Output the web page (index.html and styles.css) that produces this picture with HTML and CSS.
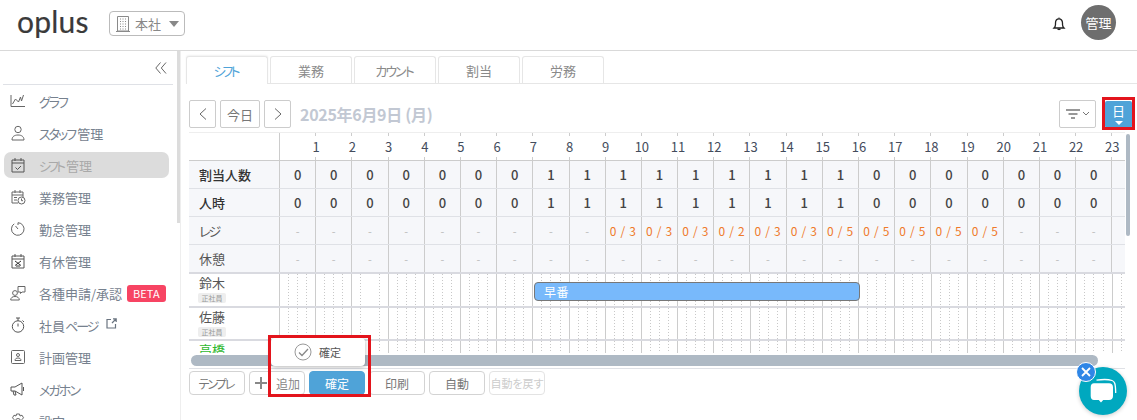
FILE: index.html
```html
<!DOCTYPE html>
<html lang="ja">
<head>
<meta charset="utf-8">
<title>oplus</title>
<link rel="stylesheet" href="styles.css">
</head>
<body>
<header class="topbar">
  <div class="logo">oplus</div>
  <div class="store">
    <svg class="store-icon" viewBox="0 0 14 16" width="14" height="16"><path d="M1.500.5h11v14.500h-11zM0 15.500h14M4 3h1M6.500 3h1M9 3h1M4 5.500h1M6.500 5.500h1M9 5.500h1M4 8h1M6.500 8h1M9 8h1M4 10.500h1M6.500 10.500h1M9 10.500h1M4 13h1M6.500 13h1M9 13h1" fill="none" stroke="#8a8a8a"/></svg>
    <span class="store-name">本社</span>
    <span class="caret"></span>
  </div>
  <div class="top-right">
    <svg viewBox="0 0 14 14" width="14" height="14"><path d="M2 11h10c-1-1-1.500-2-1.500-3.500V6C10.500 3.500 9 1.800 7 1.800S3.500 3.500 3.500 6v1.500C3.500 9 3 10 2 11z" fill="none" stroke="#222" stroke-width="1.300"/><path d="M5.500 12.300h3" stroke="#222" stroke-width="1.500"/><path d="M7 .5v1.200" stroke="#222"/></svg>
    <div class="avatar">管理</div>
  </div>
</header>
<div class="shell">
  <nav class="sidebar">
    <div class="collapse">
      <svg viewBox="0 0 12 12" width="12" height="12"><path d="M5.500 .5 .8 6l4.700 5.500M11 .5 6.300 6l4.700 5.500" fill="none" stroke="#666"/></svg>
    </div>
    <div class="nav-item">
      <svg class="nav-icon" viewBox="0 0 16 16"><path d="M1 2v11.500h14M2.500 11l3-5 3 3 2-5 1 4 2-6" fill="none" stroke="#666"/></svg>
      <span class="kana">グラフ</span>
    </div>
    <div class="nav-item">
      <svg class="nav-icon" viewBox="0 0 16 16"><circle cx="8" cy="4.500" r="3.200" fill="none" stroke="#666"/><path d="M2 15c0-3.500 2.500-5 6-5s6 1.500 6 5z" fill="none" stroke="#666"/></svg>
      <span><span class="kana">スタッフ</span>管理</span>
    </div>
    <div class="nav-item active">
      <svg class="nav-icon" viewBox="0 0 16 16"><path d="M2 3h12v12H2zM2 6h12M5 1v3M11 1v3M5.500 10.500l2 2 3.500-3.500" fill="none" stroke="#555"/></svg>
      <span><span class="kana tight">シフト</span>管理</span>
    </div>
    <div class="nav-item">
      <svg class="nav-icon" viewBox="0 0 16 16"><path d="M8 14H2V3h11v5M2 6h11M5 1v3M10 1v3M4 8.500h3M4 11h3" fill="none" stroke="#666"/><circle cx="11.500" cy="11.500" r="3.500" fill="#fff" stroke="#666"/><path d="M11.500 9.500v2.200h1.500" fill="none" stroke="#666"/></svg>
      <span>業務管理</span>
    </div>
    <div class="nav-item">
      <svg class="nav-icon" viewBox="0 0 16 16"><path d="M4.200 2.800A6.300 6.300 0 1 0 8 1.700V4M8 8 5.500 5" fill="none" stroke="#666"/></svg>
      <span>勤怠管理</span>
    </div>
    <div class="nav-item">
      <svg class="nav-icon" viewBox="0 0 16 16"><path d="M2 3h12v12H2zM2 6h12M5 1v3M11 1v3" fill="none" stroke="#555"/><path d="M5 8l6 4.500M11 8l-6 4.500M6 13h4" fill="none" stroke="#333"/></svg>
      <span>有休管理</span>
    </div>
    <div class="nav-item">
      <svg class="nav-icon" viewBox="0 0 16 16"><path d="M8 1.500h7v5.500h-3l-1.500 1.500V7H8z" fill="none" stroke="#666"/><circle cx="5" cy="8" r="2.400" fill="none" stroke="#666"/><path d="M.7 15c0-2.500 2-3.500 4.300-3.500S9.300 12.500 9.300 15z" fill="none" stroke="#666"/></svg>
      <span>各種申請/承認</span>
      <span class="beta">BETA</span>
    </div>
    <div class="nav-item">
      <svg class="nav-icon" viewBox="0 0 16 16"><circle cx="8" cy="9.500" r="5.700" fill="none" stroke="#555"/><path d="M6 1h4M8 1v3M8 9.500V6.500M12.500 3.500l1.500 1.500" fill="none" stroke="#555"/></svg>
      <span>社員<span class="kana">ページ</span></span>
      <svg class="ext" viewBox="0 0 11 11" width="11" height="11"><path d="M5 1.500H1v8.500h8.500V6M6 5l4-4M7 .8h3.200V4" fill="none" stroke="#6a7480" stroke-width="1.200"/></svg>
    </div>
    <div class="nav-item">
      <svg class="nav-icon" viewBox="0 0 16 16"><rect x="1.500" y="1.500" width="13" height="13" rx="1" fill="none" stroke="#666"/><circle cx="8" cy="6" r="1.500" fill="none" stroke="#666"/><path d="M5 11.500c0-2 1.500-2.500 3-2.500s3 .5 3 2.500z" fill="none" stroke="#666"/></svg>
      <span>計画管理</span>
    </div>
    <div class="nav-item">
      <svg class="nav-icon" viewBox="0 0 16 16"><path d="M1 6h4l7-4v12L5 10H1zM13.500 6v4M3 10l1 4h2l-1-4" fill="none" stroke="#555"/></svg>
      <span class="kana">メガホン</span>
    </div>
    <div class="nav-item">
      <svg class="nav-icon" viewBox="0 0 16 16"><circle cx="8" cy="8" r="2.500" fill="none" stroke="#666"/><path d="M6.500 1h3l.5 2 2-.8 1.500 2.600L12 6.500v3l1.500 1.700L12 13.800l-2-.8-.5 2h-3l-.5-2-2 .8-1.500-2.600L4 9.500v-3L2.500 4.800 4 2.200l2 .8z" fill="none" stroke="#666"/></svg>
      <span>設定</span>
    </div>
  </nav>
  <div class="side-scroll"><div class="side-thumb"></div></div>
  <main class="content">
    <div class="tabs">
      <div class="tab tab-active"><span class="kana tight">シフト</span></div>
      <div class="tab">業務</div>
      <div class="tab"><span class="kana">カウント</span></div>
      <div class="tab">割当</div>
      <div class="tab">労務</div>
    </div>
    <div class="toolbar">
      <button class="nav-btn arrow"><svg viewBox="0 0 8 12" width="8" height="12"><path d="M7 .5 1 6l6 5.500" fill="none" stroke="#666"/></svg></button>
      <button class="nav-btn today">今日</button>
      <button class="nav-btn arrow"><svg viewBox="0 0 8 12" width="8" height="12"><path d="M1 .5 7 6l-6 5.500" fill="none" stroke="#666"/></svg></button>
      <div class="date">2025年6月9日 (月)</div>
      <button class="nav-btn filter">
        <svg viewBox="0 0 24 10" width="24" height="10"><path d="M0 1h14M2.500 5h9M5 9h4" stroke="#777" stroke-width="1.300"/><path d="M17 3l3 3 3-3" fill="none" stroke="#777"/></svg>
      </button>
      <button class="day-btn">日<span class="day-caret"></span></button>
    </div>
    <div class="grid-wrap">
      <div class="row head">
        <div class="label"></div>
        <div class="hour"></div><div class="hour"><b>1</b></div><div class="hour"><b>2</b></div><div class="hour"><b>3</b></div><div class="hour"><b>4</b></div><div class="hour"><b>5</b></div><div class="hour"><b>6</b></div><div class="hour"><b>7</b></div><div class="hour"><b>8</b></div><div class="hour"><b>9</b></div><div class="hour"><b>10</b></div><div class="hour"><b>11</b></div><div class="hour"><b>12</b></div><div class="hour"><b>13</b></div><div class="hour"><b>14</b></div><div class="hour"><b>15</b></div><div class="hour"><b>16</b></div><div class="hour"><b>17</b></div><div class="hour"><b>18</b></div><div class="hour"><b>19</b></div><div class="hour"><b>20</b></div><div class="hour"><b>21</b></div><div class="hour"><b>22</b></div><div class="hour"><b>23</b></div>
      </div>
      <div class="row stat strong">
        <div class="label">割当人数</div>
        <div>0</div><div>0</div><div>0</div><div>0</div><div>0</div><div>0</div><div>0</div><div>1</div><div>1</div><div>1</div><div>1</div><div>1</div><div>1</div><div>1</div><div>1</div><div>1</div><div>0</div><div>0</div><div>0</div><div>0</div><div>0</div><div>0</div><div>0</div><div></div>
      </div>
      <div class="row stat strong">
        <div class="label">人時</div>
        <div>0</div><div>0</div><div>0</div><div>0</div><div>0</div><div>0</div><div>0</div><div>1</div><div>1</div><div>1</div><div>1</div><div>1</div><div>1</div><div>1</div><div>1</div><div>1</div><div>0</div><div>0</div><div>0</div><div>0</div><div>0</div><div>0</div><div>0</div><div></div>
      </div>
      <div class="row stat">
        <div class="label"><span class="kana">レジ</span></div>
        <div class="dash">-</div><div class="dash">-</div><div class="dash">-</div><div class="dash">-</div><div class="dash">-</div><div class="dash">-</div><div class="dash">-</div><div class="dash">-</div><div class="dash">-</div><div class="need">0 / 3</div><div class="need">0 / 3</div><div class="need">0 / 3</div><div class="need">0 / 2</div><div class="need">0 / 3</div><div class="need">0 / 3</div><div class="need">0 / 5</div><div class="need">0 / 5</div><div class="need">0 / 5</div><div class="need">0 / 5</div><div class="need">0 / 5</div><div class="dash">-</div><div class="dash">-</div><div class="dash">-</div><div></div>
      </div>
      <div class="row stat last">
        <div class="label">休憩</div>
        <div class="dash">-</div><div class="dash">-</div><div class="dash">-</div><div class="dash">-</div><div class="dash">-</div><div class="dash">-</div><div class="dash">-</div><div class="dash">-</div><div class="dash">-</div><div class="dash">-</div><div class="dash">-</div><div class="dash">-</div><div class="dash">-</div><div class="dash">-</div><div class="dash">-</div><div class="dash">-</div><div class="dash">-</div><div class="dash">-</div><div class="dash">-</div><div class="dash">-</div><div class="dash">-</div><div class="dash">-</div><div class="dash">-</div><div></div>
      </div>
      <div class="row staff">
        <div class="label"><div class="name">鈴木</div><div class="emp">正社員</div></div>
        <div class="timeline"><div class="shift">早番</div></div>
      </div>
      <div class="row staff">
        <div class="label"><div class="name">佐藤</div><div class="emp">正社員</div></div>
        <div class="timeline"></div>
      </div>
      <div class="row staff">
        <div class="label"><div class="name green">高橋</div></div>
        <div class="timeline"></div>
      </div>
      <div class="v-thumb"></div>
    </div>
    <div class="h-scroll"><div class="h-thumb"></div></div>
    <div class="actions">
      <button class="act"><span class="kana">テンプレ</span></button>
      <button class="act add"><svg viewBox="0 0 12 12" width="12" height="12"><path d="M6 0v12M0 6h12" stroke="#888" stroke-width="2"/></svg>追加</button>
      <button class="act confirm">確定</button>
      <button class="act">印刷</button>
      <button class="act">自動</button>
      <button class="act disabled">自動を戻す</button>
    </div>
  </main>
</div>

<div class="popup">
  <svg viewBox="0 0 18 18" width="18" height="18"><circle cx="9" cy="9" r="8" fill="none" stroke="#999"/><path d="M5 9.500l3 3 6-6.500" fill="none" stroke="#888" stroke-width="1.300"/></svg>
  <span>確定</span>
</div>
<div class="mark mark-confirm"></div>
<div class="mark mark-day"></div>
<div class="chat">
  <svg viewBox="0 0 28 26" width="28" height="26"><path d="M7.500 2.200C12 1.500 20 1.500 23 2.500 25.500 3.300 26.500 5 26.700 15" fill="none" stroke="#fff" stroke-width="1.300"/><path d="M5 5.300h15c2.500 0 4 1.500 4 4V18c0 2.500-1.500 4-4 4h-5.800L12 24.500 9.800 22H5c-2 0-3.300-1.500-3.300-4V9.300c0-2.500 1.300-4 3.300-4z" fill="#fff"/></svg>
</div>
<div class="chat-close">
  <svg viewBox="0 0 10 10" width="10" height="10"><path d="M1 1l8 8M9 1l-8 8" stroke="#fff" stroke-width="1.800"/></svg>
</div>
</body>
</html>
```
FILE: styles.css
```css
* { box-sizing: border-box; }
html, body { margin: 0; height: 420px; overflow: hidden; background: #fff; }
body { font-family: "Noto Sans CJK JP", "Noto Sans", sans-serif; font-feature-settings: "palt"; font-size: 13px; color: #333; position: relative; }
button { font-family: inherit; font-feature-settings: inherit; background: #fff; cursor: pointer; padding: 0; }
.kana { letter-spacing: -2px; margin-right: 2px; }
.tight { letter-spacing: -3px; margin-right: 3px; }

.topbar { height: 51px; border-bottom: 1px solid #d9d9d9; display: flex; align-items: center; padding-left: 17px; }
.logo { font-family: Lato, sans-serif; font-size: 30px; line-height: 34px; letter-spacing: .2px; color: #3a3a3a; -webkit-text-stroke: .2px #3a3a3a; width: 92px; margin-top: -9px; }
.store { width: 76px; height: 25px; border: 1px solid #bbb; border-radius: 4px; display: flex; align-items: center; padding-left: 6px; margin-top: -3px; color: #888; font-size: 13px; }
.store-name { margin-left: 5px; }
.caret { width: 0; height: 0; border: 5px solid transparent; border-top: 6px solid #888; border-bottom: 0; margin-left: 8px; }
.top-right { margin-left: auto; display: flex; align-items: center; gap: 15px; padding-right: 21px; margin-top: -5px; }
.top-right svg { margin-top: 3px; }
.avatar { width: 35px; height: 35px; border-radius: 50%; background: #6e6e6e; color: #fff; font-size: 13px; display: flex; align-items: center; justify-content: center; }

.shell { display: flex; height: 369px; }
.sidebar { width: 177px; overflow: hidden; flex: none; }
.collapse { height: 34px; margin: 0 4px 0 3px; border-bottom: 1px solid #dfe1e6; display: flex; justify-content: flex-end; padding: 11px 6px 0 0; }
.nav-item { height: 26px; margin: 0 8px 6px 4px; padding-left: 6px; display: flex; align-items: center; color: #76818e; font-size: 13px; border-radius: 7px; }
.collapse + .nav-item { margin-top: 3px; }
.nav-icon { width: 16px; height: 16px; margin-right: 13px; flex: none; }
.active { background: #dcdcdc; color: #a9a9a9; }
.beta { background: #f74463; color: #fff; font-size: 11px; line-height: 17px; height: 17px; padding: 0 6px; border-radius: 3px; margin-left: 5px; }
.ext { margin-left: 6px; margin-top: -4px; }
.side-scroll { width: 4px; flex: none; border-right: 1px solid #eee; height: 369px; }
.side-thumb { height: 172px; background: #dcdcdc; }

.content { flex: 1; min-width: 0; padding-left: 8px; position: relative; }
.tabs { display: flex; gap: 2px; height: 33px; margin-left: -3px; padding-top: 5px; border-bottom: 1px solid #e6e6e6; }
.tab { height: 27px; width: 82px; border: 1px solid #e6e6e6; border-bottom: 0; border-radius: 3px 3px 0 0; color: #8a8a8a; font-size: 13px; display: flex; align-items: center; justify-content: center; }
.tab-active { width: 82px; color: #4fa3d8; background: #fff; height: 28px; box-shadow: 0 -1px 2px rgba(0,0,0,.06); position: relative; z-index: 1; }

.toolbar { display: flex; align-items: center; height: 28px; margin-top: 16px; gap: 4px; padding-right: 5px; }
.nav-btn { height: 28px; border: 1px solid #ccc; border-radius: 2px; color: #777; font-size: 13px; display: flex; align-items: center; justify-content: center; }
.arrow { width: 27px; }
.today { width: 40px; }
.date { font-size: 16px; font-weight: 700; color: #c2c8d3; margin-left: 5px; letter-spacing: -.3px; }
.filter { width: 37px; margin-left: auto; }
.day-btn { width: 27px; height: 27px; margin-left: 5px; background: #4fa3d8; border: 0; border-radius: 2px; color: #fff; font-size: 13px; line-height: 15px; display: flex; flex-direction: column; align-items: center; justify-content: center; }
.day-caret { width: 0; height: 0; border: 4px solid transparent; border-top: 4px solid #fff; border-bottom: 0; margin-top: 3px; }

.grid-wrap { width: 945px; height: 221px; margin-top: 4px; overflow: hidden; position: relative; }
.row { display: grid; width: 936px; overflow: hidden; grid-template-columns: 91px repeat(24, 36.2px); }
.label { padding-left: 10px; display: flex; align-items: center; border-right: 1px solid #ccc; }
.head { height: 29px; border-top: 1px solid #eee; border-bottom: 1px solid #ccc; }
.hour { position: relative; font-size: 13px; color: #444c5c; text-align: center; }
.hour::before { content: ""; position: absolute; left: -1px; top: 0; width: 1px; height: 3px; background: #ccc; }
.hour::after { content: ""; position: absolute; left: -1px; bottom: 0; width: 1px; height: 3px; background: #ccc; }
.hour b { position: absolute; left: 0; width: 30px; margin-left: -15px; top: 5px; line-height: 18px; font-weight: 400; }
.stat { height: 28px; background: #f6f7fa; border-bottom: 1px solid #dfe1e6; }
.stat > div { display: flex; align-items: center; justify-content: center; border-right: 1px solid #ccc; font-size: 13px; color: #444; }
.stat > .label { justify-content: flex-start; color: #555; font-size: 13px; }
.strong > div { font-weight: 500; }
.strong > .label { color: #333; }
.stat > .dash { color: #bbb; font-size: 11px; font-weight: 400; }
.stat > .need { color: #ef7a2a; letter-spacing: .7px; font-size: 12px; font-weight: 400; }
.stat.last { height: 29px; border-bottom: 2px solid #d9dae0; }
.staff { display: flex; height: 33.5px; border-bottom: 2px solid #d9dae0; position: relative; }
.staff .label { width: 91px; flex: none; flex-direction: column; align-items: flex-start; justify-content: flex-start; color: #555; }
.name { font-size: 13px; line-height: 18px; }
.green { color: #2eb82e; }
.emp { background: #eee; color: #999; font-size: 7px; line-height: 10px; height: 10px; width: 28px; text-align: center; border-radius: 2px; margin-top: 1px; margin-left: -1px; }
.timeline { flex: 1; position: relative;
  background-image:
    repeating-linear-gradient(to right, transparent 0, transparent 35.2px, #ccc 35.2px, #ccc 36.2px),
    repeating-linear-gradient(to bottom, transparent 0, transparent 1px, #fff 1px, #fff 3px),
    repeating-linear-gradient(to right, transparent 0, transparent 8.05px, #c8c8c8 8.05px, #c8c8c8 9.05px);
}
.shift { position: absolute; left: 254px; width: 326px; top: 8px; height: 19px; background: #78b9fb; border: 1px solid #777; border-radius: 4px; color: #fff; font-size: 12px; letter-spacing: .4px; line-height: 17px; padding-left: 9px; z-index: 1; }
.v-thumb { position: absolute; left: 937px; top: 2px; width: 4px; height: 102px; border-radius: 2px; background: #aeb9c4; }

.h-scroll { height: 16px; width: 936px; border-bottom: 1px solid #dfe1e6; padding: 2px 0 0 2px; }
.h-thumb { width: 907px; height: 11px; border-radius: 6px; background: #aeb9c4; }
.actions { display: flex; gap: 4px; margin-top: 2px; }
.act { width: 56px; height: 24px; border: 1px solid #d3d3d3; border-radius: 4px; color: #777; font-size: 12px; white-space: nowrap; display: flex; align-items: center; justify-content: center; }
.add { justify-content: flex-start; padding-left: 5px; gap: 9px; color: #888; }
.confirm { background: #4fa3d8; color: #fff; border-color: #4fa3d8; }
.disabled { color: #ccc; border-color: #e3e3e3; overflow: hidden; font-size: 11px; }

.popup { position: absolute; left: 271px; top: 338px; width: 94px; height: 28px; background: #fff; border-radius: 4px; box-shadow: 0 1px 5px rgba(0,0,0,.3); display: flex; align-items: center; gap: 7px; padding-left: 23px; font-size: 11px; color: #555; z-index: 3; }
.mark { position: absolute; border: 3px solid #e3141c; z-index: 4; }
.mark-confirm { left: 268px; top: 335px; width: 103px; height: 62px; }
.mark-day { left: 1102px; top: 97px; width: 33px; height: 33px; }
.chat { position: absolute; left: 1079px; top: 367px; width: 48px; height: 48px; border-radius: 50%; background: #00a8bf; display: flex; align-items: center; justify-content: center; box-shadow: 0 1px 4px rgba(0,0,0,.2); z-index: 3; }
.chat-close { position: absolute; left: 1076px; top: 362px; width: 20px; height: 20px; border-radius: 50%; background: #2f86e6; border: 1px solid #fff; display: flex; align-items: center; justify-content: center; z-index: 4; }
```
